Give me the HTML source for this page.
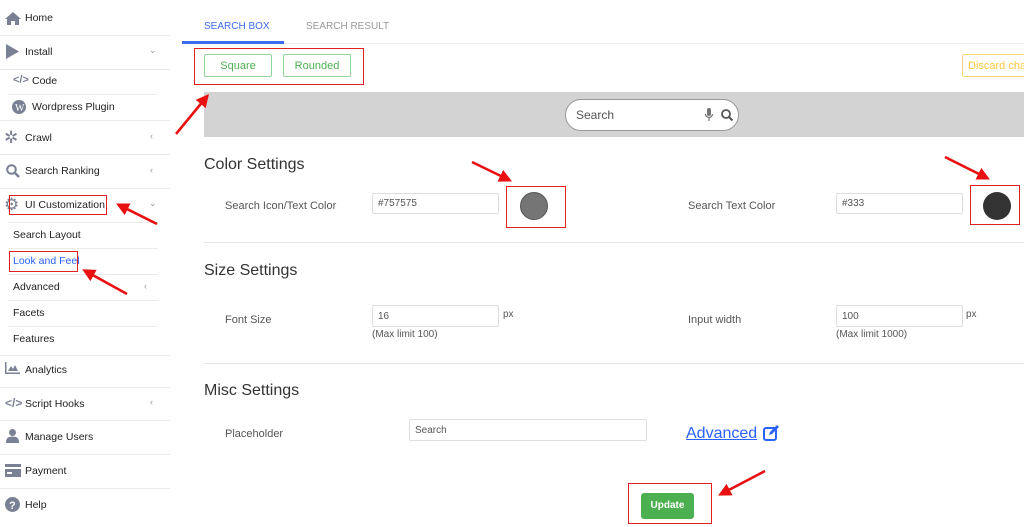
<!DOCTYPE html>
<html><head><meta charset="utf-8"><style>
*{box-sizing:border-box;margin:0;padding:0}
body{width:1024px;height:527px;overflow:hidden;background:#fff;font-family:"Liberation Sans",sans-serif;color:#333;position:relative}
.a{position:absolute;white-space:nowrap}
.s{font-size:10.5px;color:#222}
.ln{position:absolute;height:1px;background:#ebebeb}
.ic{position:absolute;fill:#7a8194}
.ch{position:absolute;font-size:9px;color:#999}
.inp{position:absolute;border:1px solid #ddd;border-radius:2px;font-size:10px;color:#555;padding:0 5px;background:#fff;display:flex;align-items:center}
.lb{font-size:11px;color:#555}
.h{font-size:16px;color:#333}
.rb{position:absolute;border:1.5px solid #e02020}
</style></head><body>
<!-- sidebar -->
<div class="ln" style="left:0;top:35px;width:170px"></div>
<div class="ln" style="left:0;top:69px;width:170px"></div>
<div class="ln" style="left:8px;top:94px;width:150px"></div>
<div class="ln" style="left:0;top:120px;width:170px"></div>
<div class="ln" style="left:0;top:154px;width:170px"></div>
<div class="ln" style="left:0;top:188px;width:170px"></div>
<div class="ln" style="left:8px;top:222px;width:150px"></div>
<div class="ln" style="left:8px;top:248px;width:150px"></div>
<div class="ln" style="left:8px;top:274px;width:150px"></div>
<div class="ln" style="left:8px;top:300px;width:150px"></div>
<div class="ln" style="left:8px;top:326px;width:150px"></div>
<div class="ln" style="left:0;top:355px;width:170px"></div>
<div class="ln" style="left:0;top:387px;width:170px"></div>
<div class="ln" style="left:0;top:420px;width:170px"></div>
<div class="ln" style="left:0;top:454px;width:170px"></div>
<div class="ln" style="left:0;top:488px;width:170px"></div>

<svg class="ic" style="left:5px;top:11px" width="16" height="14" viewBox="0 0 16 14"><path d="M8 1L0 8h2v6h4v-4h4v4h4V8h2z"/></svg>
<div class="a s" style="left:25px;top:12px">Home</div>
<svg class="ic" style="left:6px;top:44px" width="13" height="15"><path d="M0 0L13 7.5 0 15z"/></svg>
<div class="a s" style="left:25px;top:46px">Install</div><div class="ch" style="left:149px;top:45px">⌄</div>
<div class="a" style="left:13px;top:74px;font-size:11px;color:#7a8194;font-weight:bold">&lt;/&gt;</div>
<div class="a s" style="left:32px;top:75px">Code</div>
<svg class="ic" style="left:12px;top:100px" width="14" height="14"><circle cx="7" cy="7" r="7"/><text x="3" y="11" font-size="10" fill="#fff" font-family="Liberation Serif">W</text></svg>
<div class="a s" style="left:32px;top:101px">Wordpress Plugin</div>
<div class="a" style="left:4px;top:128px;font-size:17px;color:#7a8194">✲</div>
<div class="a s" style="left:25px;top:132px">Crawl</div><div class="ch" style="left:150px;top:131px">‹</div>
<svg style="position:absolute;left:6px;top:164px" width="14" height="14"><circle cx="5.5" cy="5.5" r="4.3" fill="none" stroke="#7a8194" stroke-width="2"/><path d="M9 9l4 4" stroke="#7a8194" stroke-width="2.4"/></svg>
<div class="a s" style="left:25px;top:165px">Search Ranking</div><div class="ch" style="left:150px;top:165px">‹</div>
<div class="a" style="left:4px;top:195px;font-size:17px;color:#7a8194">⚙</div>
<div class="a s" style="left:25px;top:199px">UI Customization</div><div class="ch" style="left:149px;top:198px">⌄</div>
<div class="a s" style="left:13px;top:229px">Search Layout</div>
<div class="a s" style="left:13px;top:255px;color:#2962ff">Look and Feel</div>
<div class="a s" style="left:13px;top:281px">Advanced</div><div class="ch" style="left:144px;top:281px">‹</div>
<div class="a s" style="left:13px;top:307px">Facets</div>
<div class="a s" style="left:13px;top:333px">Features</div>
<svg class="ic" style="left:5px;top:362px" width="15" height="12"><path d="M0 0h1.5v10.5H15V12H0z M3 9l3-5 2 3 2-4 3 6z"/></svg>
<div class="a s" style="left:25px;top:364px">Analytics</div>
<div class="a" style="left:5px;top:396px;font-size:12px;color:#7a8194;font-weight:bold">&lt;/&gt;</div>
<div class="a s" style="left:25px;top:398px">Script Hooks</div><div class="ch" style="left:150px;top:397px">‹</div>
<svg class="ic" style="left:6px;top:429px" width="13" height="14"><circle cx="6.5" cy="3.5" r="3.5"/><path d="M0 14c0-5 2-6.5 6.5-6.5S13 9 13 14z"/></svg>
<div class="a s" style="left:25px;top:431px">Manage Users</div>
<svg class="ic" style="left:5px;top:464px" width="16" height="13"><path d="M0 0h16v3H0zM0 5h16v8H0z"/><rect x="2" y="8" width="5" height="2" fill="#fff"/></svg>
<div class="a s" style="left:25px;top:465px">Payment</div>
<svg style="position:absolute;left:5px;top:497px" width="15" height="15"><circle cx="7.5" cy="7.5" r="7.5" fill="#7a8194"/><text x="4" y="12" font-size="11" font-weight="bold" fill="#fff">?</text></svg>
<div class="a s" style="left:25px;top:499px">Help</div>

<!-- tabs -->
<div style="position:absolute;left:182px;top:43px;width:842px;height:1px;background:#eee"></div>
<div style="position:absolute;left:182px;top:41px;width:102px;height:3px;background:#3d6bf0"></div>
<div class="a" style="left:204px;top:21px;font-size:10px;color:#3d6bf0">SEARCH BOX</div>
<div class="a" style="left:306px;top:21px;font-size:10px;color:#999">SEARCH RESULT</div>

<div class="a" style="left:204px;top:54px;width:68px;height:23px;border:1px solid #8fd49a;border-radius:2px;color:#4caf50;font-size:11px;text-align:center;line-height:23px">Square</div>
<div class="a" style="left:283px;top:54px;width:68px;height:23px;border:1px solid #8fd49a;border-radius:2px;color:#4caf50;font-size:11px;text-align:center;line-height:23px">Rounded</div>
<div class="a" style="left:962px;top:54px;width:70px;height:23px;border:1px solid #ffd77a;border-radius:2px;color:#ffc53d;font-size:11px;line-height:23px;padding-left:5px">Discard changes</div>

<div style="position:absolute;left:204px;top:92px;width:820px;height:45px;background:#d3d3d3"></div>
<div style="position:absolute;left:565px;top:99px;width:174px;height:32px;background:#fff;border:1px solid #999;border-radius:16px"></div>
<div class="a" style="left:576px;top:108px;font-size:12px;color:#555">Search</div>
<svg style="position:absolute;left:705px;top:108px" width="30" height="14"><rect x="2" y="0" width="4" height="8" rx="2" fill="#757575"/><path d="M0.5 6a3.5 3.5 0 0 0 7 0M4 10v3" stroke="#757575" fill="none" stroke-width="1.2"/><circle cx="21" cy="6" r="4" fill="none" stroke="#555" stroke-width="1.8"/><path d="M24 9l3.5 3.5" stroke="#555" stroke-width="2"/></svg>

<div class="a h" style="left:204px;top:156px">Color Settings</div>
<div class="a lb" style="left:225px;top:200px">Search Icon/Text Color</div>
<div class="inp" style="left:372px;top:193px;width:127px;height:21px">#757575</div>
<div style="position:absolute;left:520px;top:192px;width:28px;height:28px;border-radius:50%;background:#757575;border:1px solid #555"></div>
<div class="a lb" style="left:688px;top:200px">Search Text Color</div>
<div class="inp" style="left:836px;top:193px;width:127px;height:21px">#333</div>
<div style="position:absolute;left:983px;top:192px;width:28px;height:28px;border-radius:50%;background:#333"></div>

<div style="position:absolute;left:204px;top:242px;width:820px;height:1px;background:#e5e5e5"></div>
<div class="a h" style="left:204px;top:262px">Size Settings</div>
<div class="a lb" style="left:225px;top:314px">Font Size</div>
<div class="inp" style="left:372px;top:305px;width:127px;height:22px">16</div>
<div class="a lb" style="left:503px;top:309px;font-size:10px">px</div>
<div class="a" style="left:372px;top:329px;font-size:10px;color:#555">(Max limit 100)</div>
<div class="a lb" style="left:688px;top:314px">Input width</div>
<div class="inp" style="left:836px;top:305px;width:127px;height:22px">100</div>
<div class="a lb" style="left:966px;top:309px;font-size:10px">px</div>
<div class="a" style="left:836px;top:329px;font-size:10px;color:#555">(Max limit 1000)</div>

<div style="position:absolute;left:204px;top:363px;width:820px;height:1px;background:#e5e5e5"></div>
<div class="a h" style="left:204px;top:382px">Misc Settings</div>
<div class="a lb" style="left:225px;top:428px">Placeholder</div>
<div class="inp" style="left:409px;top:419px;width:238px;height:22px">Search</div>
<div class="a" style="left:686px;top:425px;font-size:16px;color:#2962ff;text-decoration:underline">Advanced</div>
<svg style="position:absolute;left:763px;top:425px" width="18" height="16"><rect x="1" y="3" width="12" height="12" rx="2" fill="none" stroke="#2962ff" stroke-width="2"/><path d="M6 10l1-3 7-7 2 2-7 7z" fill="#2962ff"/></svg>

<div class="a" style="left:641px;top:493px;width:53px;height:26px;background:#4caf50;border-radius:3px;color:#fff;font-size:10px;font-weight:bold;text-align:center;line-height:26px">Update</div>

<!-- red boxes -->
<div class="rb" style="left:194px;top:48px;width:170px;height:37px"></div>
<div class="rb" style="left:506px;top:186px;width:60px;height:42px"></div>
<div class="rb" style="left:970px;top:185px;width:50px;height:40px"></div>
<div class="rb" style="left:9px;top:195px;width:98px;height:20px"></div>
<div class="rb" style="left:9px;top:251px;width:69px;height:21px"></div>
<div class="rb" style="left:628px;top:483px;width:84px;height:41px"></div>

<svg style="position:absolute;left:0;top:0" width="1024" height="527">
<defs><marker id="m" markerWidth="5" markerHeight="5" refX="2" refY="2.5" orient="auto"><path d="M0 0L5 2.5 0 5z" fill="#e81010"/></marker></defs>
<g stroke="#e81010" stroke-width="2.6" marker-end="url(#m)">
<line x1="176" y1="134" x2="204" y2="100"/>
<line x1="472" y1="162" x2="505" y2="178"/>
<line x1="945" y1="157" x2="983" y2="176"/>
<line x1="157" y1="224" x2="123" y2="207"/>
<line x1="127" y1="294" x2="89" y2="273"/>
<line x1="765" y1="471" x2="725" y2="492"/>
</g></svg>
</body></html>
